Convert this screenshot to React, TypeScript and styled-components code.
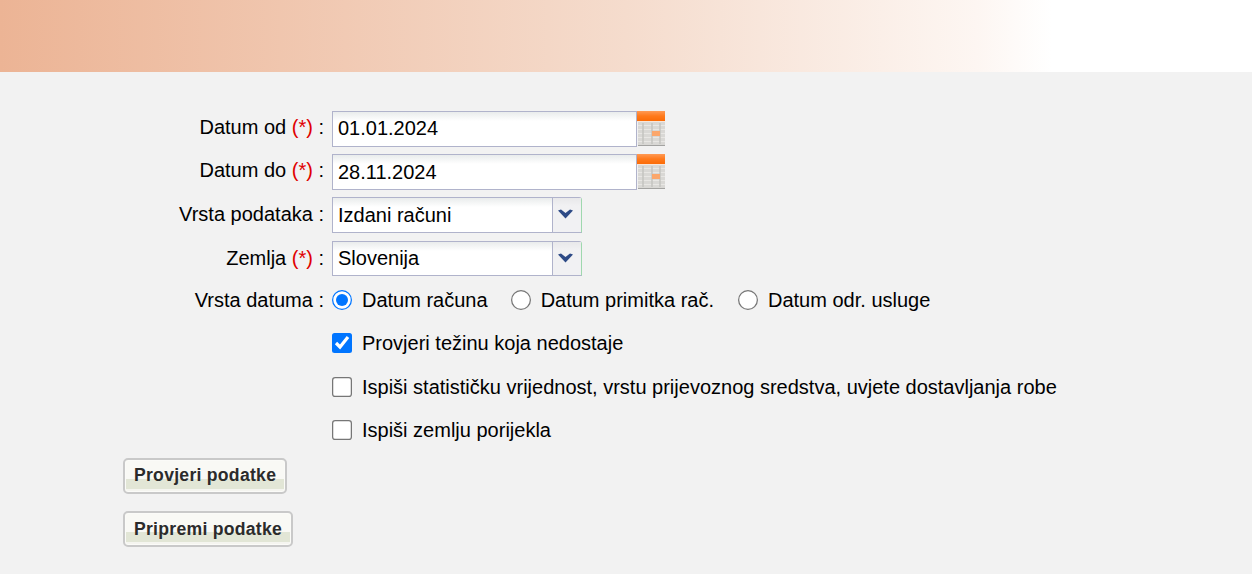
import React from "react";
import styled, { createGlobalStyle } from "styled-components";

const GlobalStyle = createGlobalStyle`
  html, body {
    margin: 0;
    padding: 0;
    background: #f2f2f2;
    font-family: "Liberation Sans", Arial, sans-serif;
    font-size: 20px;
    color: #000;
    overflow: hidden;
  }
`;

const Header = styled.div`
  height: 72px;
  background: linear-gradient(to right, #ecb495 0%, #f5dccd 50%, #fdf6f2 78%, #ffffff 84%);
`;

const Form = styled.div`
  display: flex;
  flex-direction: column;
  padding-top: 39px;
`;

const Row = styled.div<{ $height: number; $gap: number }>`
  display: grid;
  grid-template-columns: 324px auto;
  column-gap: 8px;
  align-items: center;
  height: ${(p) => p.$height}px;
  margin-bottom: ${(p) => p.$gap}px;
`;

const Label = styled.div<{ $lift?: number }>`
  text-align: right;
  white-space: nowrap;
  padding-bottom: ${(p) => p.$lift ?? 0}px;
`;

const Required = styled.span`
  color: #e00000;
`;

const Field = styled.div`
  display: flex;
  align-items: flex-start;
  height: 100%;
`;

const DateInput = styled.div<{ $lift?: number }>`
  box-sizing: border-box;
  display: flex;
  align-items: center;
  width: 305px;
  height: 100%;
  padding: 0 5px ${(p) => p.$lift ?? 0}px;
  border: 1px solid #b0b3cb;
  background: linear-gradient(to bottom, #e9ecec 0, #ffffff 9px);
`;

const SelectBox = styled.div`
  box-sizing: border-box;
  display: flex;
  width: 250px;
  height: 100%;
  border: 1px solid #b0b3cb;
  border-right-color: #9fd8ae;
  border-radius: 0 3px 0 0;
`;

const SelectText = styled.div`
  box-sizing: border-box;
  display: flex;
  align-items: center;
  width: 220px;
  padding: 0 5px;
  border-right: 1px solid #b0b3cb;
  background: linear-gradient(to bottom, #e9ecec 0, #ffffff 9px);
`;

const SelectArrow = styled.div`
  flex: 1;
  display: flex;
  align-items: center;
  justify-content: center;
  padding: 0 3px 2px 0;
  background: linear-gradient(to bottom, #e8e8ea 0, #f1f1f3 8px);
`;

const Options = styled.div`
  display: flex;
  align-items: center;
`;

const Option = styled.label<{ $gap?: number }>`
  display: flex;
  align-items: center;
  margin-right: ${(p) => p.$gap ?? 0}px;
  white-space: nowrap;
  line-height: 24px;
`;

const Radio = styled.input.attrs({ type: "radio" })`
  zoom: 1.25;
  width: 16.8px;
  height: 16.8px;
  margin: 0 7.2px 0 0;
`;

const Check = styled.input.attrs({ type: "checkbox" })`
  zoom: 1.25;
  width: 16px;
  height: 16px;
  margin: 0 8px 0 0;
`;

const Actions = styled.div`
  display: flex;
  flex-direction: column;
  align-items: flex-start;
  gap: 17px;
  padding-left: 123px;
`;

const Button = styled.button<{ $lift?: number }>`
  box-sizing: border-box;
  height: 36px;
  padding: 0 9px ${(p) => p.$lift ?? 0}px;
  border: 2px solid #c9c9c9;
  border-radius: 5px;
  box-shadow: inset 0 0 0 1px #fbfbf8;
  background: linear-gradient(to bottom, #f9f9f5 0, #f9f9f5 58%, #e2e6d6 58%, #e2e6d6 90%, #f5f5f0 90%);
  font-family: "Liberation Sans", Arial, sans-serif;
  font-size: 17.6px;
  font-weight: 700;
  color: #2b2b2b;
  letter-spacing: 0.27px;
  white-space: nowrap;
`;

const CalendarSvg = styled.svg`
  display: block;
  flex: none;
  filter: blur(0.5px);
`;

const CalendarIcon = () => (
  <CalendarSvg width="28" height="36" viewBox="0 0 28 36" aria-hidden="true">
    <defs>
      <linearGradient id="calTop" x1="0" y1="0" x2="0" y2="1">
        <stop offset="0" stopColor="#ff9a55" />
        <stop offset="0.5" stopColor="#ff7a1c" />
        <stop offset="1" stopColor="#fb6c08" />
      </linearGradient>
    </defs>
    <rect x="0" y="0" width="28" height="10" fill="url(#calTop)" />
    <rect x="0" y="10" width="28" height="1" fill="#f7e6da" />
    <rect x="1" y="11" width="27" height="23" fill="#d9d8d5" />
    <rect x="1" y="34" width="27" height="1" fill="#a3a3a1" />
    <g stroke="#e8e7e4" strokeWidth="1">
      <path d="M1 14.5H28M1 18.5H28M1 22.5H28M1 26.5H28M1 30.5H28" />
    </g>
    <g stroke="#c4c3c0" strokeWidth="1.5">
      <path d="M6 12V33M15 12V33M23 12V33" />
    </g>
    <rect x="15" y="20" width="8" height="5" fill="#fba76c" />
  </CalendarSvg>
);

const ChevronIcon = () => (
  <svg width="15" height="10" viewBox="0 0 15 10" aria-hidden="true">
    <path d="M0 1.5 L3 0.5 L7.5 4 L12 0.5 L15 1.5 L7.5 9.5 Z" fill="#2d4a86" />
  </svg>
);

const App = () => {
  return (
    <>
      <GlobalStyle />
      <Header />
      <Form>
        <Row $height={35} $gap={8}>
          <Label $lift={4}>
            Datum od <Required>(*)</Required> :
          </Label>
          <Field>
            <DateInput $lift={1}>01.01.2024</DateInput>
            <CalendarIcon />
          </Field>
        </Row>
        <Row $height={36} $gap={7}>
          <Label $lift={4}>
            Datum do <Required>(*)</Required> :
          </Label>
          <Field>
            <DateInput>28.11.2024</DateInput>
            <CalendarIcon />
          </Field>
        </Row>
        <Row $height={36} $gap={8}>
          <Label $lift={2}>Vrsta podataka :</Label>
          <SelectBox>
            <SelectText>Izdani računi</SelectText>
            <SelectArrow>
              <ChevronIcon />
            </SelectArrow>
          </SelectBox>
        </Row>
        <Row $height={35} $gap={12}>
          <Label>
            Zemlja <Required>(*)</Required> :
          </Label>
          <SelectBox>
            <SelectText>Slovenija</SelectText>
            <SelectArrow>
              <ChevronIcon />
            </SelectArrow>
          </SelectBox>
        </Row>
        <Row $height={24} $gap={19}>
          <Label>Vrsta datuma :</Label>
          <Options>
            <Option $gap={23}>
              <Radio name="vrsta" defaultChecked />
              Datum računa
            </Option>
            <Option $gap={24}>
              <Radio name="vrsta" />
              Datum primitka rač.
            </Option>
            <Option>
              <Radio name="vrsta" />
              Datum odr. usluge
            </Option>
          </Options>
        </Row>
        <Row $height={24} $gap={20}>
          <span />
          <Option>
            <Check defaultChecked />
            Provjeri težinu koja nedostaje
          </Option>
        </Row>
        <Row $height={24} $gap={19}>
          <span />
          <Option>
            <Check />
            Ispiši statističku vrijednost, vrstu prijevoznog sredstva, uvjete dostavljanja robe
          </Option>
        </Row>
        <Row $height={24} $gap={16}>
          <span />
          <Option>
            <Check />
            Ispiši zemlju porijekla
          </Option>
        </Row>
        <Actions>
          <Button $lift={2}>Provjeri podatke</Button>
          <Button>Pripremi podatke</Button>
        </Actions>
      </Form>
    </>
  );
};

export default App;
